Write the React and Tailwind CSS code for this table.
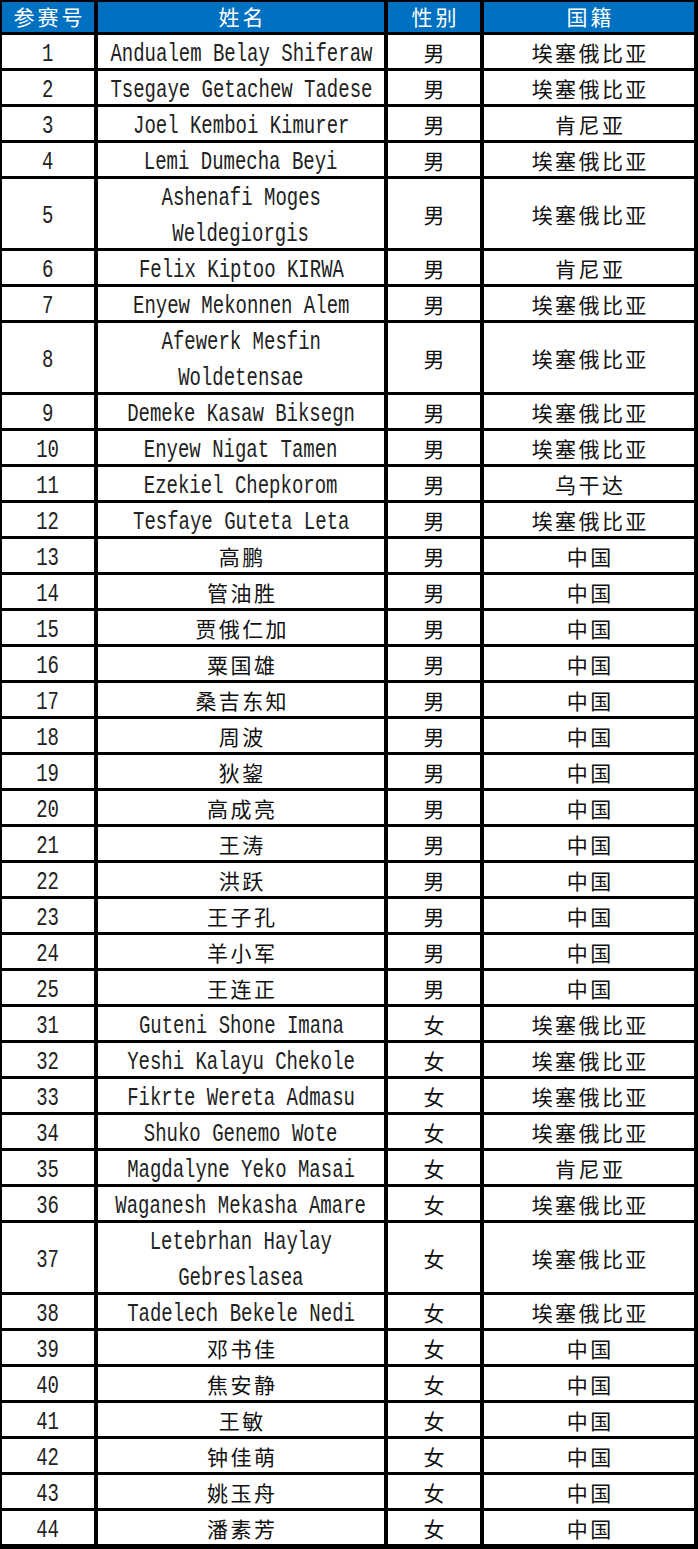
import React from 'react';

const rows = [
  ['1', ['Andualem Belay Shiferaw'], '男', '埃塞俄比亚'],
  ['2', ['Tsegaye Getachew Tadese'], '男', '埃塞俄比亚'],
  ['3', ['Joel Kemboi Kimurer'], '男', '肯尼亚'],
  ['4', ['Lemi Dumecha Beyi'], '男', '埃塞俄比亚'],
  ['5', ['Ashenafi Moges', 'Weldegiorgis'], '男', '埃塞俄比亚'],
  ['6', ['Felix Kiptoo KIRWA'], '男', '肯尼亚'],
  ['7', ['Enyew Mekonnen Alem'], '男', '埃塞俄比亚'],
  ['8', ['Afewerk Mesfin', 'Woldetensae'], '男', '埃塞俄比亚'],
  ['9', ['Demeke Kasaw Biksegn'], '男', '埃塞俄比亚'],
  ['10', ['Enyew Nigat Tamen'], '男', '埃塞俄比亚'],
  ['11', ['Ezekiel Chepkorom'], '男', '乌干达'],
  ['12', ['Tesfaye Guteta Leta'], '男', '埃塞俄比亚'],
  ['13', ['高鹏'], '男', '中国'],
  ['14', ['管油胜'], '男', '中国'],
  ['15', ['贾俄仁加'], '男', '中国'],
  ['16', ['粟国雄'], '男', '中国'],
  ['17', ['桑吉东知'], '男', '中国'],
  ['18', ['周波'], '男', '中国'],
  ['19', ['狄鋆'], '男', '中国'],
  ['20', ['高成亮'], '男', '中国'],
  ['21', ['王涛'], '男', '中国'],
  ['22', ['洪跃'], '男', '中国'],
  ['23', ['王子孔'], '男', '中国'],
  ['24', ['羊小军'], '男', '中国'],
  ['25', ['王连正'], '男', '中国'],
  ['31', ['Guteni Shone Imana'], '女', '埃塞俄比亚'],
  ['32', ['Yeshi Kalayu Chekole'], '女', '埃塞俄比亚'],
  ['33', ['Fikrte Wereta Admasu'], '女', '埃塞俄比亚'],
  ['34', ['Shuko Genemo Wote'], '女', '埃塞俄比亚'],
  ['35', ['Magdalyne Yeko Masai'], '女', '肯尼亚'],
  ['36', ['Waganesh Mekasha Amare'], '女', '埃塞俄比亚'],
  ['37', ['Letebrhan Haylay', 'Gebreslasea'], '女', '埃塞俄比亚'],
  ['38', ['Tadelech Bekele Nedi'], '女', '埃塞俄比亚'],
  ['39', ['邓书佳'], '女', '中国'],
  ['40', ['焦安静'], '女', '中国'],
  ['41', ['王敏'], '女', '中国'],
  ['42', ['钟佳萌'], '女', '中国'],
  ['43', ['姚玉舟'], '女', '中国'],
  ['44', ['潘素芳'], '女', '中国'],
];

const isLatin = (s) => /^[\x00-\x7f]+$/.test(s);

function Txt({ children }) {
  if (isLatin(children)) {
    return (
      <span className="inline-block shrink-0 whitespace-pre font-['Liberation_Mono',monospace] text-[26px] leading-[36px] scale-x-[0.73] translate-y-[2px] origin-center text-[#222]">
        {children}
      </span>
    );
  }
  return (
    <span className="inline-block shrink-0 whitespace-pre font-['Noto_Sans_CJK_SC',sans-serif] text-[21px] leading-[36px] tracking-[2.4px] pl-[2.4px] text-[#111]">
      {children}
    </span>
  );
}

function Cell({ lines, h }) {
  return (
    <div className={`bg-white flex flex-col items-center justify-center overflow-visible ${h}`}>
      {lines.map((l, i) => (
        <Txt key={i}>{l}</Txt>
      ))}
    </div>
  );
}

export default function App() {
  const heads = ['参赛号', '姓名', '性别', '国籍'];
  return (
    <div className="w-[698px] bg-black pt-[2px] pb-[5px] pl-[2px] pr-[4px]">
      <div className="grid grid-cols-[92px_286px_92px_210px] gap-x-[4px] gap-y-[3px]">
        {heads.map((t) => (
          <div
            key={t}
            className="h-[30px] bg-[#0070c0] text-white flex items-center justify-center font-['Noto_Sans_CJK_SC',sans-serif] text-[21px] tracking-[3px] pl-[3px]"
          >
            {t}
          </div>
        ))}
        {rows.map(([no, name, sex, nat]) => {
          const h = name.length > 1 ? 'h-[69px]' : 'h-[33px]';
          return (
            <React.Fragment key={no}>
              <Cell lines={[no]} h={h} />
              <Cell lines={name} h={h} />
              <Cell lines={[sex]} h={h} />
              <Cell lines={[nat]} h={h} />
            </React.Fragment>
          );
        })}
      </div>
    </div>
  );
}
